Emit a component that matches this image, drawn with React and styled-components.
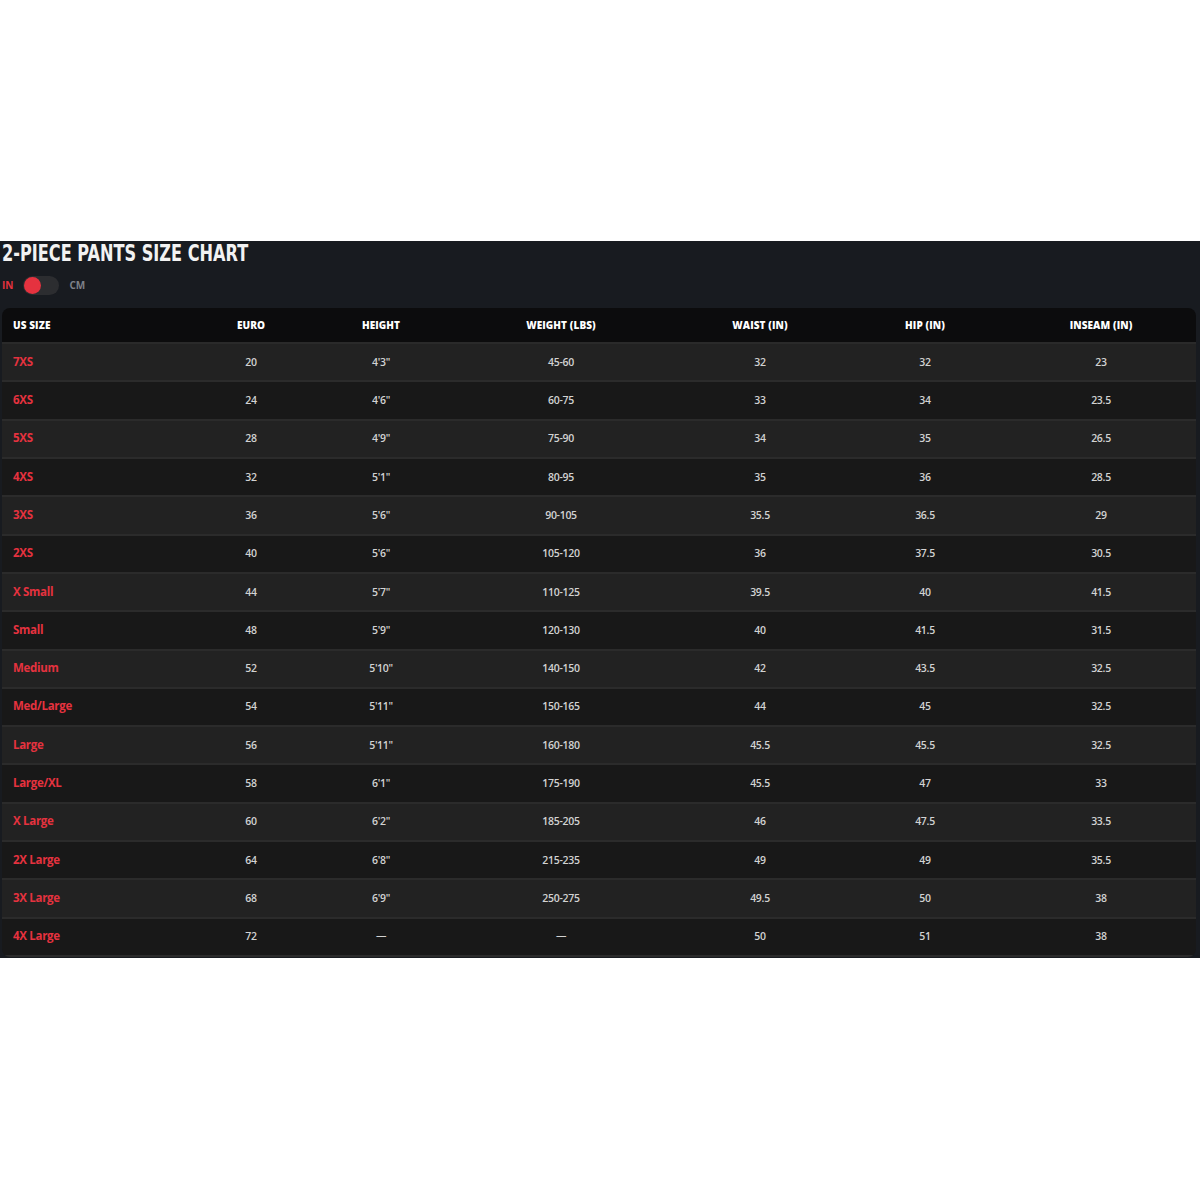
import React from "react";
import styled, { createGlobalStyle } from "styled-components";

const Global = createGlobalStyle`
  html, body { margin: 0; padding: 0; background: #ffffff; }
  body { font-family: "Open Sans", "Liberation Sans", sans-serif; }
`;

const Page = styled.div`
  min-height: 1199px;
  display: flex;
  flex-direction: column;
  justify-content: center;
`;

const Section = styled.section`
  background: #181b20;
  padding: 0 1px 1px 2px;
  display: flex;
  flex-direction: column;
`;

const TitleRow = styled.div`
  height: 27px;
  overflow: visible;
  display: flex;
  align-items: flex-start;
`;

const Title = styled.h2`
  margin: 0;
  display: inline-block;
  font-family: "DejaVu Sans Condensed", "DejaVu Sans", sans-serif;
  font-weight: 700;
  font-size: 23px;
  line-height: 25px;
  letter-spacing: 0;
  color: #f2f2f2;
  transform: scaleX(0.78);
  transform-origin: left center;
  white-space: nowrap;
`;

const UnitRow = styled.div`
  display: flex;
  align-items: center;
  gap: 10px;
  height: 34px;
  margin-bottom: 6px;
`;

const UnitLabel = styled.span`
  font-family: "Open Sans", sans-serif;
  font-weight: 700;
  font-size: 10px;
  color: ${(p) => (p.$active ? "#e2323f" : "#7d8088")};
`;

const Switch = styled.div`
  width: 36px;
  height: 19px;
  border-radius: 10px;
  background: #2c2d30;
  display: flex;
  align-items: center;
  padding: 0 1px;
  box-sizing: border-box;
`;

const Knob = styled.span`
  width: 17px;
  height: 17px;
  border-radius: 50%;
  background: #e5323f;
`;

const Table = styled.table`
  width: 1194px;
  border-collapse: separate;
  border-spacing: 0;
  table-layout: fixed;
  border-radius: 8px;
  overflow: hidden;
  font-family: "Open Sans", sans-serif;
`;

const HeadCell = styled.th`
  background: #0c0c0d;
  color: #ffffff;
  font-weight: 800;
  font-size: 10px;
  letter-spacing: 0.1px;
  height: 36px;
  padding: 0;
  text-align: ${(p) => (p.$left ? "left" : "center")};
  padding-left: ${(p) => (p.$left ? "11px" : "0")};
  border-bottom: 2px solid #2a2a2a;
  box-sizing: border-box;
`;

const Row = styled.tr`
  background: ${(p) => (p.$alt ? "#222222" : "#181818")};
`;

const Cell = styled.td`
  height: 38.3px;
  padding: 0;
  padding-bottom: 1px;
  text-align: center;
  color: #d2d2d2;
  font-weight: 600;
  font-size: 10.5px;
  letter-spacing: -0.3px;
  border-bottom: 2px solid #2b2b2b;
  box-sizing: border-box;
`;

const SizeCell = styled(Cell)`
  text-align: left;
  padding-left: 11px;
  color: #e5323f;
  font-weight: 700;
  font-size: 11.5px;
  padding-bottom: 2px;
`;

const cols = [184, 130, 130, 230, 168, 162, 190];
const headers = ["US SIZE", "EURO", "HEIGHT", "WEIGHT (LBS)", "WAIST (IN)", "HIP (IN)", "INSEAM (IN)"];

const rows = [
  ["7XS", "20", "4'3\"", "45-60", "32", "32", "23"],
  ["6XS", "24", "4'6\"", "60-75", "33", "34", "23.5"],
  ["5XS", "28", "4'9\"", "75-90", "34", "35", "26.5"],
  ["4XS", "32", "5'1\"", "80-95", "35", "36", "28.5"],
  ["3XS", "36", "5'6\"", "90-105", "35.5", "36.5", "29"],
  ["2XS", "40", "5'6\"", "105-120", "36", "37.5", "30.5"],
  ["X Small", "44", "5'7\"", "110-125", "39.5", "40", "41.5"],
  ["Small", "48", "5'9\"", "120-130", "40", "41.5", "31.5"],
  ["Medium", "52", "5'10\"", "140-150", "42", "43.5", "32.5"],
  ["Med/Large", "54", "5'11\"", "150-165", "44", "45", "32.5"],
  ["Large", "56", "5'11\"", "160-180", "45.5", "45.5", "32.5"],
  ["Large/XL", "58", "6'1\"", "175-190", "45.5", "47", "33"],
  ["X Large", "60", "6'2\"", "185-205", "46", "47.5", "33.5"],
  ["2X Large", "64", "6'8\"", "215-235", "49", "49", "35.5"],
  ["3X Large", "68", "6'9\"", "250-275", "49.5", "50", "38"],
  ["4X Large", "72", "—", "—", "50", "51", "38"],
];

export default function App() {
  return (
    <>
      <Global />
      <Page>
        <Section>
          <TitleRow>
            <Title>2-PIECE PANTS SIZE CHART</Title>
          </TitleRow>
          <UnitRow>
            <UnitLabel $active>IN</UnitLabel>
            <Switch>
              <Knob />
            </Switch>
            <UnitLabel>CM</UnitLabel>
          </UnitRow>
          <Table>
            <colgroup>
              {cols.map((w, i) => (
                <col key={i} style={{ width: w }} />
              ))}
            </colgroup>
            <thead>
              <tr>
                {headers.map((h, i) => (
                  <HeadCell key={h} $left={i === 0}>
                    {h}
                  </HeadCell>
                ))}
              </tr>
            </thead>
            <tbody>
              {rows.map((r, ri) => (
                <Row key={r[0]} $alt={ri % 2 === 0}>
                  <SizeCell>{r[0]}</SizeCell>
                  {r.slice(1).map((v, ci) => (
                    <Cell key={ci}>{v}</Cell>
                  ))}
                </Row>
              ))}
            </tbody>
          </Table>
        </Section>
      </Page>
    </>
  );
}
